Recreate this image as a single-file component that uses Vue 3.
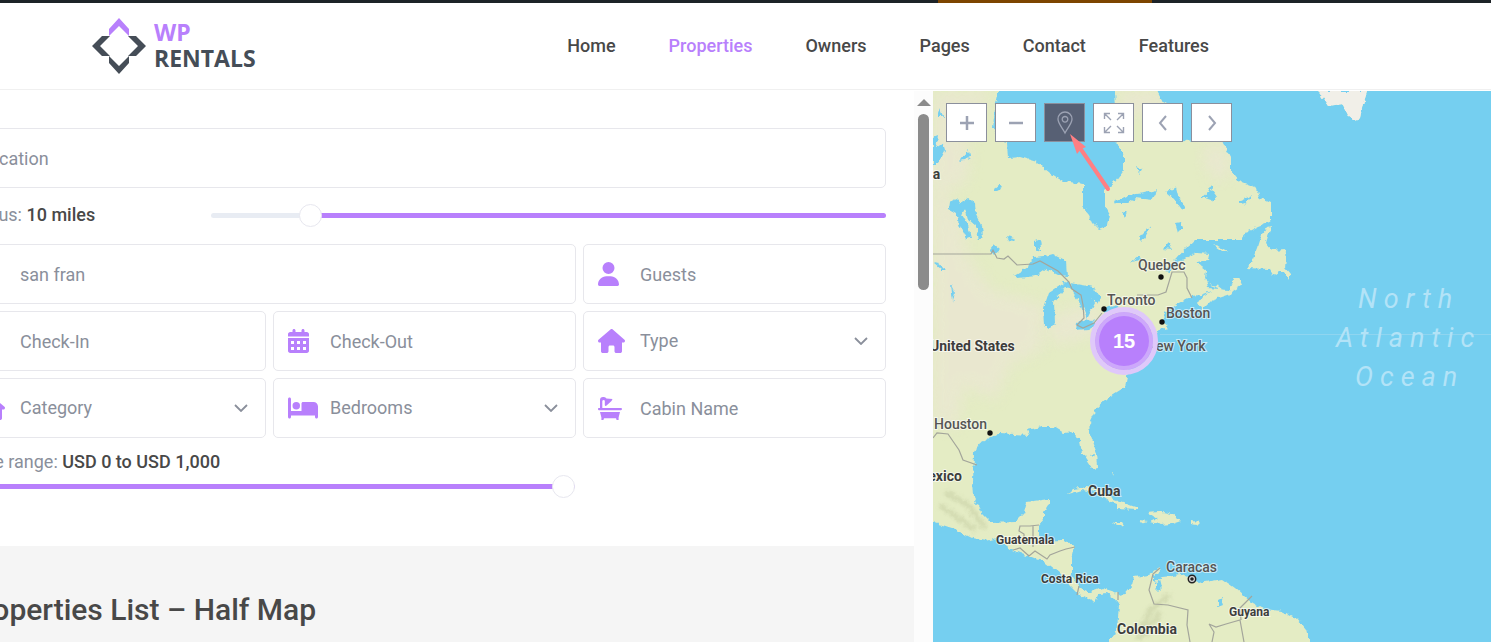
<script setup>
import { ref } from 'vue'

const nav = ['Home', 'Properties', 'Owners', 'Pages', 'Contact', 'Features']

const icons = {
  user: {
    box: '0 0 448 512', w: 21,
    d: 'M224 256A128 128 0 1 0 224 0a128 128 0 1 0 0 256zm-45.7 48C79.8 304 0 383.8 0 482.3C0 498.7 13.3 512 29.7 512H418.3c16.4 0 29.7-13.3 29.7-29.7C448 383.8 368.2 304 269.7 304H178.3z',
  },
  calendar: {
    box: '0 0 448 512', w: 21,
    d: 'M96 32V64H48C21.5 64 0 85.5 0 112v48H448V112c0-26.500-21.500-48-48-48H352V32c0-17.700-14.300-32-32-32s-32 14.300-32 32V64H160V32c0-17.700-14.300-32-32-32S96 14.300 96 32zM448 192H0V464c0 26.500 21.500 48 48 48H400c26.500 0 48-21.500 48-48V192zM64 256h64v64H64zM192 256h64v64h-64zM320 256h64v64h-64zM64 384h64v64H64zM192 384h64v64h-64zM320 384h64v64h-64z',
  },
  house: {
    box: '0 0 576 512', w: 27,
    d: 'M575.8 255.5c0 18-15 32.1-32 32.1h-32l.7 160.2c0 2.700-.2 5.400-.5 8.100V472c0 22.100-17.900 40-40 40H392c-22.100 0-40-17.900-40-40V384c0-17.700-14.300-32-32-32H256c-17.700 0-32 14.300-32 32v88c0 22.100-17.900 40-40 40H104c-22.100 0-40-17.900-40-40V287.600H32c-18 0-32-14-32-32.100c0-9 3-17 10-24L266.400 8c7-7 15-8 22-8s15 2 21 7L564.800 231.500c8 7 12 15 11 24z',
  },
  bed: {
    box: '0 0 640 512', w: 30,
    d: 'M32 32c17.700 0 32 14.300 32 32V320H288V160c0-17.700 14.300-32 32-32H544c53 0 96 43 96 96V448c0 17.700-14.300 32-32 32s-32-14.300-32-32V416H64v32c0 17.700-14.300 32-32 32s-32-14.300-32-32V64C0 46.300 14.300 32 32 32zm144 96a80 80 0 1 1 0 160 80 80 0 1 1 0-160z',
  },
  bath: {
    box: '0 0 24 24', w: 24,
    d: 'M2 12V4Q2 1 5 1Q7.500 0.500 8.500 2.400L14.500 3 13.500 5 8.600 9.500Q7 10.500 6.800 9V4.500Q5 3.300 4.300 5V12H23Q24 12 24 13T23 14.300H1Q0 14.300 0 13T1 12ZM2 16H22L20.600 21.500V24H18.600L18 22.300H6L5.400 24H3.400V21.500Z',
  },
}

const fields = [
  { label: 'Search', value: 'san fran', icon: 'user', wide: true },
  { label: 'Guests', icon: 'user' },
  { label: 'Check-In', icon: 'calendar' },
  { label: 'Check-Out', icon: 'calendar' },
  { label: 'Type', icon: 'house', select: true },
  { label: 'Category', icon: 'house', select: true },
  { label: 'Bedrooms', icon: 'bed', select: true },
  { label: 'Cabin Name', icon: 'bath' },
]

const radius = ref(10)
const price = ref(1000)

const controls = [
  { name: 'Zoom in', d: 'M13 6V20M6 13H20', w: 2.5 },
  { name: 'Zoom out', d: 'M6 13H20', w: 2.5 },
  { name: 'My location', active: true, d: 'M13 23C10 17 6 13.500 6 9A7 7 0 0 1 20 9C20 13.500 16 17 13 23ZM13 6.500A2.800 2.800 0 1 0 13 12.100A2.800 2.800 0 1 0 13 6.500Z', w: 1.3 },
  { name: 'Full screen', d: 'M3.500 9V3.500H9M3.500 3.500L10 10M17 3.500H22.500V9M22.500 3.500L16 10M3.500 17V22.500H9M3.500 22.500L10 16M22.500 17V22.500H17M22.500 22.500L16 16', w: 1.4 },
  { name: 'Previous', d: 'M16 6L10 13L16 20', w: 2 },
  { name: 'Next', d: 'M10 6L16 13L10 20', w: 2 },
]

const land = [
  '933,91 999,91 995,108 993,128 1000,141 1008,143 1009,158 1020,157 1037,162 1050,173 1063,181 1083,184 1083,207 1089,214 1093,223 1099,229 1108,226 1110,215 1105,206 1105,190 1115,182 1124,170 1124,157 1119,147 1114,140 1117,125 1115,91 1157,91 1162,101 1172,106 1175,122 1183,140 1192,142 1205,133 1223,142 1230,156 1230,170 1239,181 1257,188 1260,198 1271,203 1271,221 1258,226 1248,231 1240,240 1195,240 1188,246 1177,258 1165,271 1169,272 1180,262 1197,253 1209,254 1208,261 1197,263 1206,270 1205,278 1208,288 1229,290 1235,278 1238,278 1241,285 1232,291 1230,294 1212,300 1202,310 1198,304 1203,296 1211,291 1200,295 1192,296 1175,305 1165,313 1162,322 1169,328 1160,330 1148,337 1140,345 1130,365 1127,377 1125,387 1109,397 1095,410 1089,423 1090,433 1097,453 1098,467 1092,468 1082,453 1080,442 1074,432 1064,433 1054,427 1042,427 1027,430 1029,435 999,433 980,443 974,453 973,480 974,497 982,513 992,523 1015,522 1024,513 1027,502 1049,499 1049,504 1044,512 1044,520 1039,526 1039,541 1065,540 1075,547 1072,560 1072,577 1079,588 1089,593 1102,588 1115,592 1122,597 1132,585 1134,577 1149,575 1160,567 1161,570 1154,575 1154,582 1162,577 1182,575 1199,583 1222,579 1235,588 1252,603 1264,609 1281,611 1297,619 1306,630 1309,642 1109,642 1117,630 1119,605 1114,598 1107,593 1099,594 1095,602 1079,595 1070,586 1060,573 1047,563 1029,556 1012,550 997,538 985,541 972,538 952,528 933,522',
  '1318,91 1367,91 1363,104 1360,118 1354,120 1347,114 1342,104 1328,106',
  '1267,227 1271,226 1266,243 1272,250 1285,249 1287,257 1286,268 1291,274 1288,279 1284,272 1279,272 1273,276 1269,269 1247,268 1253,259 1258,247 1262,234',
  '1212,245 1219,247 1228,252 1222,252',
  '1068,494 1073,489 1087,487 1103,491 1114,500 1124,503 1138,508 1138,510 1117,509 1117,504 1109,501 1096,492 1082,490 1072,493',
  '1113,522 1122,522 1124,525 1118,526', '1147,512 1158,511 1172,514 1181,521 1172,524 1161,525 1151,522 1157,519',
  '1191,521 1200,522 1197,525 1191,524', '1139,520 1147,521 1141,523', '1211,293 1223,290 1218,286 1208,284 1218,288',
  '1088,460 1096,460 1097,467 1092,468', '1112,472 1114,473 1113,476',
]

const tan = [
  '933,91 990,91 985,105 960,115 965,135 970,160 965,185 945,190 965,230 965,250 990,290 1045,305 1042,350 1010,365 995,400 965,385 955,430 933,420',
  '1120,91 1157,91 1170,108 1125,118',
  '1200,150 1222,142 1229,160 1230,175 1218,182 1208,170',
  '1060,310 1100,305 1095,335 1060,345 1045,335',
]

const lakes = [
  '950,202 957,199 960,203 968,198 975,203 976,214 982,226 983,237 979,240 976,226 968,219 965,208 962,215 968,224 971,238 966,239 960,226 956,213 949,209',
  '1014,276 1029,267 1033,257 1045,256 1052,254 1066,261 1067,277 1060,276 1046,269 1036,276 1018,278',
  '1053,290 1064,282 1093,287 1101,299 1098,304 1091,298 1095,303 1087,319 1081,304 1070,288 1064,287',
  '1048,293 1060,285 1063,290 1054,302 1055,323 1049,329 1044,326 1043,308',
  '1077,323 1086,319 1098,323 1088,329 1076,330', '1101,309 1118,305 1114,312 1105,313',
  '1035,242 1040,240 1041,249 1035,251', '1006,236 1015,238 1014,241 1008,240', '959,161 969,150 970,157 965,160',
  '994,189 1000,184 1003,188 995,192', '933,138 938,136 936,149 943,144 945,151 938,164 933,164',
  '937,117 940,108 944,117', '1115,201 1128,195 1145,193 1158,190 1152,200 1136,198 1129,203 1116,203',
  '1166,192 1176,187 1178,195 1185,207 1182,210 1174,199', '1202,197 1208,192 1210,187 1217,197 1211,200',
  '1240,201 1252,196 1246,204 1240,205', '1122,213 1128,211 1125,218', '1140,238 1147,227 1150,228 1143,241',
  '1175,223 1181,222 1183,228 1178,233', '1163,249 1169,243 1172,250', '1134,167 1142,169 1140,173',
  '933,263 938,264 946,270 941,270', '951,284 955,292 953,302', '990,250 994,245 1000,250 994,255',
  '1155,583 1160,579 1162,587 1158,591 1155,588', '1218,600 1222,598 1223,605 1218,607',
  '1130,262 1138,256 1141,260', '1091,455 1095,454 1094,458',
]

const borders = [
  'M933 254H991L993 250L997 258L1004 259L1008 256L1017 265L1033 264L1040 261L1058 271L1065 278L1069 282L1072 289L1081 295L1083 305L1084 318L1077 325L1083 328L1094 323L1102 313M1137 295H1158L1166 292L1172 272L1184 272L1187 278V288L1192 298M933 438L937 433L948 434L959 450L963 460L977 465',
  'M1039 525L1030 526H1020L1019 531L1024 534L1024 540M1033 526V547M1013 550L1020 548L1029 556L1035 551L1047 559L1050 555L1060 551L1066 549L1075 547M1079 586L1077 595M1118 592V600M1160 568L1153 574L1149 590L1154 604L1168 605L1188 610L1187 625L1190 642M1209 624L1216 627L1226 624L1240 620L1244 642M1252 596L1240 608L1241 620M1209 624L1214 632L1212 642',
]

const labels = [
  { t: 'Quebec', x: 1138, y: 270, s: 14 }, { t: 'Toronto', x: 1107, y: 305, s: 14 },
  { t: 'Boston', x: 1166, y: 318, s: 14 }, { t: 'New York', x: 1146, y: 351, s: 14 },
  { t: 'Houston', x: 934, y: 429, s: 14 }, { t: 'Caracas', x: 1166, y: 572, s: 14 },
  { t: 'United States', x: 930, y: 351, s: 14, b: true }, { t: 'Canada', x: 893, y: 179, s: 14, b: true },
  { t: 'Mexico', x: 916, y: 481, s: 14, b: true }, { t: 'Cuba', x: 1088, y: 496, s: 14, b: true },
  { t: 'Guatemala', x: 996, y: 544, s: 12, b: true }, { t: 'Costa Rica', x: 1041, y: 583, s: 12, b: true },
  { t: 'Colombia', x: 1117, y: 634, s: 14, b: true }, { t: 'Guyana', x: 1229, y: 616, s: 12, b: true },
]
const cities = [[1161, 277], [1104, 309], [1162, 322], [990, 433]]
</script>

<template>
  <div class="page">
    <div class="admin-bar"><span class="admin-accent"></span></div>
    <header class="header">
      <a class="logo" href="#" aria-label="WP Rentals">
        <svg class="logo-mark" viewBox="0 0 54 56" aria-hidden="true">
          <path fill="#b880fc" d="M27 0L37 11V18L27 8L17 18V11Z" />
          <path fill="#454d57" d="M0 28L10 18H18L8 28L18 38H10ZM54 28L44 18H36L46 28L36 38H44ZM27 56L37 45V38L27 48L17 38V45Z" />
        </svg>
        <span class="logo-text"><span class="logo-top">WP</span><span>RENTALS</span></span>
      </a>
      <nav class="nav">
        <a v-for="n in nav" :key="n" href="#" :class="{ current: n === 'Properties' }">{{ n }}</a>
      </nav>
    </header>

    <main class="body">
      <div class="panel">
        <form class="search" @submit.prevent>
          <label class="field location"><input type="text" placeholder="Location" aria-label="Location" /></label>
          <div class="radius">
            <label class="caption" for="radius">Radius: <strong>{{ radius }} miles</strong></label>
            <input id="radius" v-model="radius" class="slider from" type="range" min="0" max="74" />
          </div>
          <div class="grid">
            <label v-for="f in fields" :key="f.label" class="field" :class="{ wide: f.wide }">
              <span class="icon">
                <svg :viewBox="icons[f.icon].box" :width="icons[f.icon].w" height="24" aria-hidden="true">
                  <path :d="icons[f.icon].d" fill-rule="evenodd" fill="#b880fc" />
                </svg>
              </span>
              <template v-if="f.select">
                <select :aria-label="f.label"><option>{{ f.label }}</option></select>
                <svg class="chevron" viewBox="0 0 14 8" width="14" height="8" aria-hidden="true">
                  <path d="M1 1L7 7L13 1" fill="none" stroke="#8a8f9b" stroke-width="1.8" />
                </svg>
              </template>
              <input v-else type="text" :placeholder="f.value || f.label" :aria-label="f.label" />
            </label>
            <div class="price">
              <label class="caption" for="price">Price range: <strong>USD 0 to USD 1,000</strong></label>
              <input id="price" v-model="price" class="slider" type="range" min="0" max="1000" />
            </div>
          </div>
        </form>
        <section class="results"><h1>Properties List – Half Map</h1></section>
      </div>

      <div class="scroll" aria-hidden="true">
        <span class="scroll-up"></span>
        <span class="scroll-thumb"></span>
      </div>

      <div class="map">
        <svg class="canvas" viewBox="933 91 558 551" preserveAspectRatio="xMinYMin slice" aria-label="Map">
          <defs>
            <filter id="coast" filterUnits="userSpaceOnUse" x="923" y="81" width="578" height="571">
              <feTurbulence type="fractalNoise" baseFrequency="0.18" numOctaves="2" seed="4" />
              <feDisplacementMap in="SourceGraphic" scale="6" xChannelSelector="R" yChannelSelector="G" />
            </filter>
            <filter id="soft" x="-20%" y="-20%" width="140%" height="140%"><feGaussianBlur stdDeviation="7" /></filter>
            <filter id="relief" x="-20%" y="-20%" width="140%" height="140%"><feGaussianBlur stdDeviation="2" /></filter>
            <clipPath id="main"><polygon :points="land[0]" /></clipPath>
          </defs>
          <rect x="933" y="91" width="558" height="551" fill="#75cff0" />
          <g filter="url(#coast)">
            <path d="M923 81H999V95H923ZM923 90H940V522H923ZM1115 81H1157V95H1115ZM1109 638H1309V655H1109Z" fill="#e4ecc4" />
            <polygon v-for="p in land" :key="p" :points="p" fill="#e4ecc4" />
            <g clip-path="url(#main)">
              <polygon v-for="p in tan" :key="p" :points="p" fill="#eae7d2" opacity="0.8" filter="url(#soft)" />
              <path d="M945 492L968 505L985 528M940 505L975 530M1170 595L1150 610L1138 640M1160 612L1145 635" fill="none" stroke="#d0d8ae" stroke-width="5" filter="url(#relief)" />
            </g>
            <polygon :points="land[1]" fill="#f1efe8" />
            <polygon v-for="p in lakes" :key="p" :points="p" fill="#75cff0" />
          </g>
          <path v-for="b in borders" :key="b" :d="b" fill="none" stroke="#a3a59b" stroke-width="1.2" />
          <path d="M1160 334.500H1491" stroke="#8fd5f0" />
          <g class="ocean">
            <text x="1358" y="308">North</text>
            <text x="1336" y="347">Atlantic</text>
            <text x="1355" y="386">Ocean</text>
          </g>
          <circle v-for="c in cities" :key="c[0]" :cx="c[0]" :cy="c[1]" r="2.700" fill="#111" />
          <circle cx="1192" cy="579" r="3.700" fill="#ddd" stroke="#222" stroke-width="1.500" />
          <circle cx="1192" cy="579" r="1.800" fill="#222" />
          <text v-for="l in labels" :key="l.t" class="place" :class="{ country: l.b, small: l.s === 12 }" :x="l.x" :y="l.y">{{ l.t }}</text>
        </svg>
        <button class="cluster" type="button">15</button>
        <div class="controls">
          <button v-for="c in controls" :key="c.name" type="button" :aria-label="c.name" :class="{ active: c.active }">
            <svg viewBox="0 0 26 26" width="26" height="26" aria-hidden="true">
              <path :d="c.d" fill="none" :stroke-width="c.w" stroke="currentColor" />
            </svg>
          </button>
        </div>
        <svg class="pointer" viewBox="0 0 42 58" width="42" height="58" aria-hidden="true">
          <path d="M38 55L10 14" stroke="#ff7f83" stroke-width="4" stroke-linecap="round" />
          <path d="M0 0L16 13L11 15L7 20Z" fill="#ff7f83" />
        </svg>
      </div>
    </main>
  </div>
</template>

<style>
body { margin: 0; background: #fff; }
</style>

<style scoped>
* { box-sizing: border-box; }
.page { min-height: 100vh; display: flex; flex-direction: column; overflow: hidden; font-family: Roboto, "Liberation Sans", sans-serif; color: #484848; }
.admin-bar { height: 3px; background: #1d2327; display: grid; grid-template-columns: 938fr 214fr 339fr; }
.admin-accent { grid-column: 2; background: #7d4500; }
.header { display: flex; justify-content: space-between; align-items: center; height: 87px; padding: 0 282px 0 92px; border-bottom: 1px solid #f0f0f0; margin-bottom: 1px; }
.logo { display: flex; align-items: center; gap: 8px; text-decoration: none; color: #454d57; }
.logo-mark { width: 54px; height: 56px; }
.logo-text { display: flex; flex-direction: column; padding-bottom: 2px; font: 700 23px/26px "Open Sans", "Noto Sans", sans-serif; }
.logo-top { color: #b880fc; }
.nav { display: flex; gap: 53px; font-size: 18px; font-weight: 500; line-height: 24px; }
.nav a { color: #484848; text-decoration: none; }
.nav a.current { color: #b880fc; }
.body { flex: 1; display: grid; grid-template-columns: minmax(0, 914fr) 19px minmax(0, 558fr); }
.panel { overflow: hidden; display: flex; flex-direction: column; }
.search { margin: 37px 28px 48px -37px; }
.field { display: flex; align-items: center; position: relative; height: 60px; border: 1px solid #e7e7ec; border-radius: 5px; background: #fff; }
.field input, .field select { flex: 1; min-width: 0; height: 100%; border: 0; padding: 0; margin: 0; background: none; font: 400 18px/24px Roboto, sans-serif; color: #8a8f9b; appearance: none; outline: 0; }
.field input::placeholder { color: #8a8f9b; opacity: 1; }
.location { padding-left: 15px; }
.icon { width: 56px; padding-left: 14px; display: flex; align-items: center; }
.chevron { position: absolute; right: 17px; pointer-events: none; }
.radius { display: flex; align-items: center; height: 56px; padding-bottom: 2px; }
.radius .caption { flex: 0 0 248px; }
.caption { font-size: 18px; line-height: 24px; color: #8a8f9b; }
.caption strong { font-weight: 500; color: #484848; }
.grid { display: grid; grid-template-columns: repeat(3, minmax(0, 1fr)); gap: 7px; }
.wide, .price { grid-column: span 2; }
.price { display: flex; flex-direction: column; gap: 1px; padding: 5px 1px 0 0; }
.slider { appearance: none; width: 100%; height: 23px; margin: 0; background: none; }
.slider::-webkit-slider-runnable-track { height: 5px; border-radius: 3px; background: #b880fc; }
.slider.from::-webkit-slider-runnable-track { background: linear-gradient(90deg, #e8ecf3 15%, #b880fc 15%); }
.slider::-webkit-slider-thumb { appearance: none; width: 23px; height: 23px; margin-top: -9px; border: 1px solid #e7e7ef; border-radius: 50%; background: #fff; }
.results { flex: 1; background: #f5f5f5; padding: 44px 28px 11px 0; }
.results h1 { margin: 0 0 0 -37px; font-size: 30px; font-weight: 500; line-height: 40px; }
.scroll { background: #fcfcfc; display: flex; flex-direction: column; align-items: center; gap: 8px; padding-top: 8px; }
.scroll-up { border: 7px solid transparent; border-top: 0; border-bottom-color: #8b8b8b; }
.scroll-thumb { width: 11px; height: 176px; border-radius: 6px; background: #8b8b8b; }
.map { position: relative; overflow: hidden; }
.canvas { position: absolute; inset: 0; width: 100%; height: 100%; }
.place { font: 500 14px Roboto, sans-serif; fill: #555; stroke: #fff; stroke-opacity: 0.6; stroke-width: 2px; paint-order: stroke; }
.place.country { font-weight: 700; fill: #3d3d3d; }
.place.small { font-size: 12px; }
.ocean { font: italic 400 27px Roboto, sans-serif; letter-spacing: 7px; fill: #b3e3f7; }
.cluster { position: absolute; left: 157px; top: 216px; width: 68px; height: 68px; padding: 0; border: 5px solid #dfc8fa; border-radius: 50%; background: #b880fc; background-clip: padding-box; box-shadow: inset 0 0 0 4px #cda8fb; color: #fff; font: 700 20px/24px "Liberation Sans", Arial, sans-serif; }
.controls { position: absolute; left: 13px; top: 12px; display: flex; gap: 8px; }
.controls button { width: 41px; height: 39px; padding: 0; display: flex; align-items: center; justify-content: center; border: 1px solid #8b8f9c; background: #fff; color: #9ca2b3; }
.controls button.active { background: #576074; }
.pointer { position: absolute; left: 137px; top: 43px; pointer-events: none; }
</style>
